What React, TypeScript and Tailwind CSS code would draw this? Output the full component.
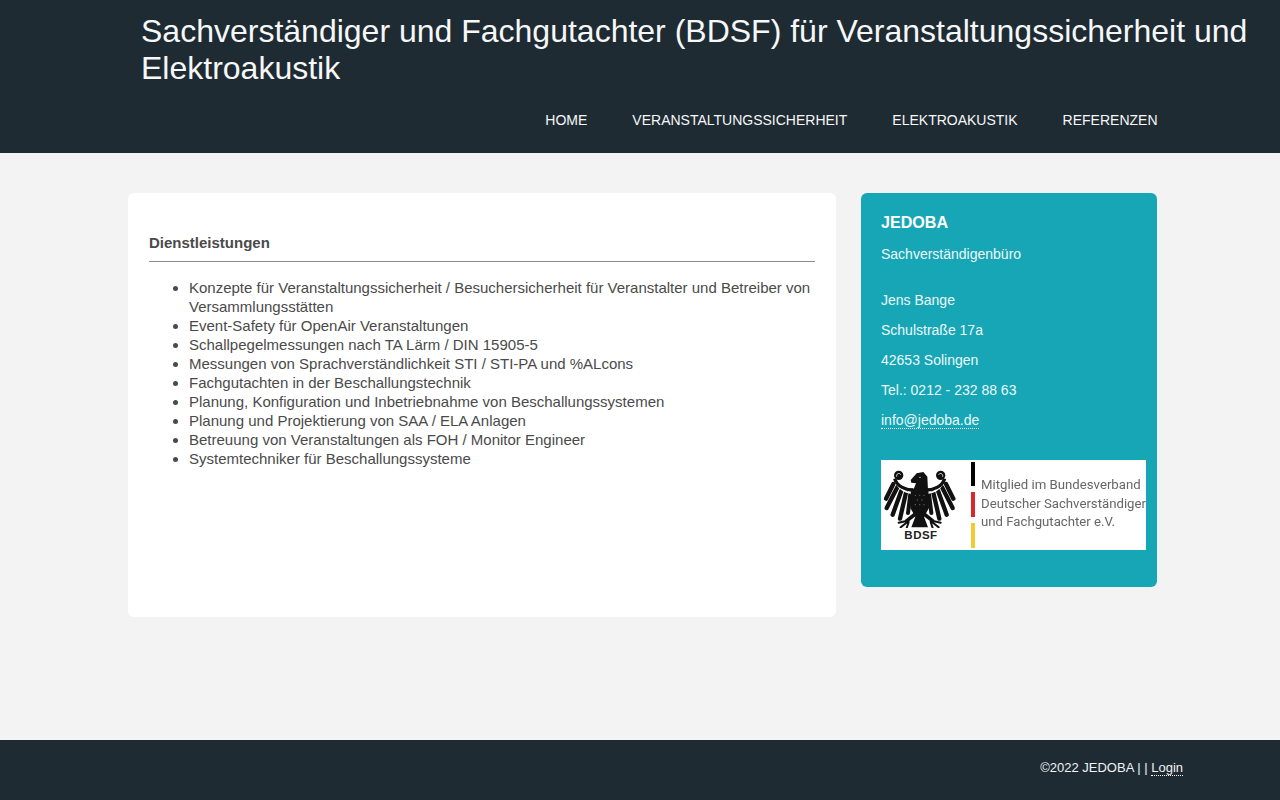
const navItems = ["HOME", "VERANSTALTUNGSSICHERHEIT", "ELEKTROAKUSTIK", "REFERENZEN"];

const services = [
  "Konzepte für Veranstaltungssicherheit / Besuchersicherheit für Veranstalter und Betreiber von Versammlungsstätten",
  "Event-Safety für OpenAir Veranstaltungen",
  "Schallpegelmessungen nach TA Lärm / DIN 15905-5",
  "Messungen von Sprachverständlichkeit STI / STI-PA und %ALcons",
  "Fachgutachten in der Beschallungstechnik",
  "Planung, Konfiguration und Inbetriebnahme von Beschallungssystemen",
  "Planung und Projektierung von SAA / ELA Anlagen",
  "Betreuung von Veranstaltungen als FOH / Monitor Engineer",
  "Systemtechniker für Beschallungssysteme",
];

// one half of the eagle, mirrored around x=125
function EagleHalf() {
  return (
    <g>
      <g stroke="#111" strokeLinecap="round" fill="none">
        <path d="M46 78L24 122" strokeWidth="13" />
        <path d="M58 88L26 150" strokeWidth="13" />
        <path d="M70 98L44 170" strokeWidth="13" />
        <path d="M84 104L66 182" strokeWidth="13" />
        <path d="M97 108L90 165" strokeWidth="12" />
      </g>
      <path d="M56 76C64 94 84 106 106 106" stroke="#fff" strokeWidth="5" fill="none" />
      <path d="M50 62C56 84 82 96 106 96" stroke="#111" strokeWidth="10" fill="none" />
      <circle cx="62" cy="52" r="14" fill="#111" />
      <path d="M56 56C54 47 64 43 68 50" stroke="#fff" strokeWidth="2.5" fill="none" />
      <path d="M112 168L84 190" stroke="#111" strokeWidth="11" />
      <path d="M88 188L62 194M88 192L68 208M92 192L86 210" stroke="#111" strokeWidth="6" strokeLinecap="round" />
    </g>
  );
}

function Eagle() {
  return (
    <svg viewBox="9 6 255 204" className="h-[68px] w-[85px] blur-[0.3px]">
      <EagleHalf />
      <g transform="translate(250,0) scale(-1,1)">
        <EagleHalf />
      </g>
      <path d="M99 92L151 92L153 150L138 176L150 208H100L112 176L97 150Z" fill="#111" />
      <path d="M98 66L116 46L136 42L148 56L150 96L106 96L114 76L100 74Z" fill="#111" />
      <circle cx="126" cy="58" r="2" fill="#fff" />
      <g fill="#fff" opacity="0.35">
        <circle cx="112" cy="112" r="2" />
        <circle cx="125" cy="112" r="2" />
        <circle cx="138" cy="112" r="2" />
        <circle cx="118" cy="126" r="2" />
        <circle cx="132" cy="126" r="2" />
        <circle cx="112" cy="140" r="2" />
        <circle cx="125" cy="140" r="2" />
        <circle cx="138" cy="140" r="2" />
      </g>
    </svg>
  );
}

function BdsfLogo() {
  return (
    <div className="flex h-[90px] w-[265px] bg-white">
      <div className="w-[85px] shrink-0 pr-[5px] text-center">
        <Eagle />
        <p className="text-[11.5px] font-bold leading-[14px] tracking-[0.5px] text-[#222]">BDSF</p>
      </div>
      <div className="ml-[5px] flex w-[4px] shrink-0 flex-col justify-between py-[2px]">
        <div className="h-[24px] bg-black" />
        <div className="h-[25px] bg-[#d9282b]" />
        <div className="h-[25px] bg-[#f5c932]" />
      </div>
      <div className="ml-[6px] flex flex-col justify-center whitespace-nowrap pb-[2px] font-['Roboto',sans-serif] text-[13.2px] leading-[18.5px] text-[#666] blur-[0.3px]">
        <span>Mitglied im Bundesverband</span>
        <span>Deutscher Sachverständiger</span>
        <span>und Fachgutachter e.V.</span>
      </div>
    </div>
  );
}

export default function App() {
  return (
    <div className="flex min-h-[800px] flex-col bg-[#f3f3f3] font-['Liberation_Sans',Arial,sans-serif] text-[#4a4a4a] antialiased">
      <header className="h-[153px] bg-[#1f2b33] text-[#f6f7f8]">
        <h1 className="pl-[141px] pr-[20px] pt-[13px] text-[32px] leading-[36.8px]">
          Sachverständiger und Fachgutachter (BDSF) für Veranstaltungssicherheit und Elektroakustik
        </h1>
        <nav className="mt-[23.4px] flex justify-end gap-[45px] pr-[122.5px] text-[14px] leading-[20px]">
          {navItems.map((item) => (
            <a key={item}>{item}</a>
          ))}
        </nav>
      </header>

      <main className="flex flex-1 items-start gap-[25px] pl-[128px] pt-[40px]">
        <section className="h-[424px] w-[708px] rounded-md bg-white px-[21px] pt-[41px]">
          <h2 className="border-b border-[#8c8c8c] pb-[9px] text-[15px] font-bold leading-[18px]">Dienstleistungen</h2>
          <ul className="mt-[16px] list-disc pl-[40px] text-[15px] leading-[19px]">
            {services.map((service) => (
              <li key={service}>{service}</li>
            ))}
          </ul>
        </section>

        <aside className="h-[394px] w-[296px] rounded-md bg-[#16a6b6] pl-[20px] pt-[20px] text-[14px] leading-[20px] text-[#eef8f9]">
          <h3 className="text-[16.1px] font-bold leading-[19px] text-white">JEDOBA</h3>
          <p className="mt-[12px]">Sachverständigenbüro</p>
          <div className="mt-[26px] flex flex-col gap-[10px]">
            <p>Jens Bange</p>
            <p>Schulstraße 17a</p>
            <p>42653 Solingen</p>
            <p>Tel.: 0212 - 232 88 63</p>
            <p>
              <a className="border-b border-dotted border-white">info@jedoba.de</a>
            </p>
          </div>
          <div className="mt-[30px]">
            <BdsfLogo />
          </div>
        </aside>
      </main>

      <footer className="flex h-[60px] justify-end bg-[#1f2b33] pr-[97px] pt-[19px] text-[13px] leading-[18px] text-[#f0f2f3]">
        <p>
          ©2022 JEDOBA | | <a className="border-b border-dotted border-white">Login</a>
        </p>
      </footer>
    </div>
  );
}
